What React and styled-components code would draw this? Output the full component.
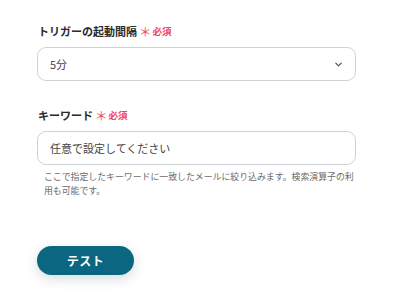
import React from 'react';
import styled, { createGlobalStyle } from 'styled-components';

const GlobalStyle = createGlobalStyle`
  html, body {
    margin: 0;
    padding: 0;
    background: #ffffff;
  }
  body {
    font-family: "Noto Sans CJK JP", "Noto Sans", sans-serif;
    color: #333333;
  }
`;

const Page = styled.div`
  width: 395px;
  height: 303px;
  box-sizing: border-box;
  padding: 22px 39px 0 37px;
  display: flex;
  flex-direction: column;
`;

const Field = styled.div`
  display: flex;
  flex-direction: column;
  margin-bottom: ${props => props.gap || 0}px;
`;

const Label = styled.div`
  display: flex;
  align-items: center;
  height: 18px;
  margin-bottom: 7px;
  padding-left: 1px;
  font-size: 11px;
  font-weight: 700;
  color: #2b2b2b;
`;

const Required = styled.span`
  display: inline-flex;
  align-items: center;
  margin-left: 2px;
  color: #f0456a;
  font-size: 9.5px;
  font-weight: 700;
`;

const Star = styled.span`
  font-size: 12.5px;
  font-weight: 400;
  margin-right: 1px;
  line-height: 1;
  position: relative;
  top: 1px;
`;

const Box = styled.div`
  height: 34px;
  box-sizing: border-box;
  border: 1px solid #cfd2d9;
  border-radius: 9px;
  display: flex;
  align-items: center;
  justify-content: space-between;
  padding: 0 12px 0 12px;
  font-size: 11px;
  color: #444444;
  background: #ffffff;
`;

const Chevron = styled.svg`
  width: 9px;
  height: 9px;
`;

const Help = styled.p`
  margin: 5px 0 0 7px;
  font-size: 8.9px;
  line-height: 14px;
  color: #6b6b6b;
`;

const Button = styled.button`
  margin-top: 1px;
  width: 97px;
  height: 29px;
  border: none;
  border-radius: 15px;
  background: #0b6781;
  color: #ffffff;
  font-family: inherit;
  font-size: 12px;
  font-weight: 700;
  letter-spacing: 0.5px;
  box-shadow: 0 4px 12px rgba(40, 60, 80, 0.18);
  cursor: pointer;
`;

export default function App() {
  return (
    <>
      <GlobalStyle />
      <Page>
        <Field gap={25}>
          <Label>
            トリガーの起動間隔
            <Required>
              <Star>＊</Star>必須
            </Required>
          </Label>
          <Box>
            <span>5分</span>
            <Chevron viewBox="0 0 10 10" fill="none">
              <path d="M2 3.5 L5 6.5 L8 3.5" stroke="#555" strokeWidth="1.4" strokeLinecap="round" strokeLinejoin="round" />
            </Chevron>
          </Box>
        </Field>
        <Field gap={47}>
          <Label>
            キーワード
            <Required>
              <Star>＊</Star>必須
            </Required>
          </Label>
          <Box>
            <span>任意で設定してください</span>
          </Box>
          <Help>
            ここで指定したキーワードに一致したメールに絞り込みます。検索演算子の利用も可能です。
          </Help>
        </Field>
        <div>
          <Button>テスト</Button>
        </div>
      </Page>
    </>
  );
}
